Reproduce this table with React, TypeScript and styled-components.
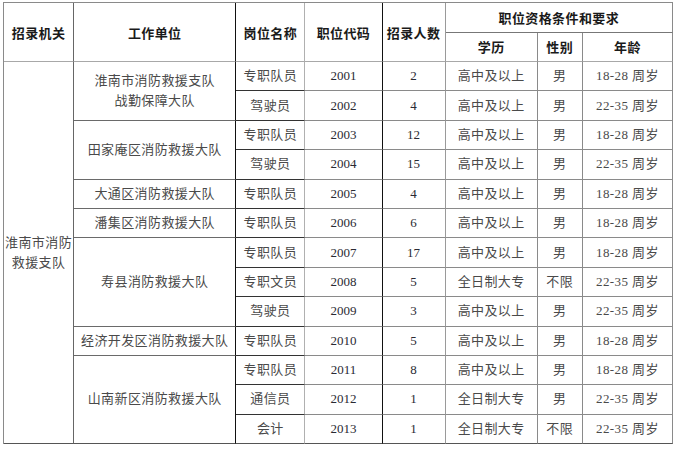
import React from "react";
import styled, { createGlobalStyle } from "styled-components";

const Global = createGlobalStyle`
  html, body { margin: 0; padding: 0; background: #fff; }
  body { font-family: "Liberation Serif", "Noto Sans CJK SC", serif; }
`;

const Page = styled.div`
  padding: 2px 0 0 3px;
`;

const Table = styled.table`
  border-collapse: separate;
  border-spacing: 0;
  table-layout: fixed;
  width: 670px;
  border-top: 1px solid #8a8a8a;
  border-left: 1px solid #8a8a8a;
  font-family: "Liberation Serif", "Noto Sans CJK SC", serif;
  font-size: 13px;
`;

const HeadRow = styled.tr`
  height: 29.5px;
`;

const BodyRow = styled.tr`
  height: 29.4px;
`;

type CellProps = { $r?: string; $b?: string };

const Th = styled.th<CellProps>`
  padding: 0;
  font-weight: 700;
  color: #1a1a1a;
  text-align: center;
  vertical-align: middle;
  letter-spacing: 0.4px;
  border-right: 1px solid ${(p) => p.$r || "#8a8a8a"};
  border-bottom: 1px solid ${(p) => p.$b || "#a8a8a8"};
`;

const Td = styled.td<CellProps>`
  padding: 0;
  font-weight: 400;
  color: #4a4a4a;
  text-align: center;
  vertical-align: middle;
  line-height: 20px;
  letter-spacing: 0.4px;
  white-space: nowrap;
  border-right: 1px solid ${(p) => p.$r || "#8a8a8a"};
  border-bottom: 1px solid ${(p) => p.$b || "#808080"};
`;

const Num = styled(Td)`
  color: #2a2a33;
  letter-spacing: 0;
`;

const C1 = "#666";
const C2 = "#111";
const C3 = "#b0b0b0";
const C4 = "#111";
const C5 = "#9a9a9a";

type Row = {
  unit?: { text: React.ReactNode; span: number };
  post: string;
  code: string;
  count: string;
  edu: string;
  sex: string;
  age: string;
};

const rows: Row[] = [
  { unit: { text: <>淮南市消防救援支队<br />战勤保障大队</>, span: 2 }, post: "专职队员", code: "2001", count: "2", edu: "高中及以上", sex: "男", age: "18-28 周岁" },
  { post: "驾驶员", code: "2002", count: "4", edu: "高中及以上", sex: "男", age: "22-35 周岁" },
  { unit: { text: "田家庵区消防救援大队", span: 2 }, post: "专职队员", code: "2003", count: "12", edu: "高中及以上", sex: "男", age: "18-28 周岁" },
  { post: "驾驶员", code: "2004", count: "15", edu: "高中及以上", sex: "男", age: "22-35 周岁" },
  { unit: { text: "大通区消防救援大队", span: 1 }, post: "专职队员", code: "2005", count: "4", edu: "高中及以上", sex: "男", age: "18-28 周岁" },
  { unit: { text: "潘集区消防救援大队", span: 1 }, post: "专职队员", code: "2006", count: "6", edu: "高中及以上", sex: "男", age: "18-28 周岁" },
  { unit: { text: "寿县消防救援大队", span: 3 }, post: "专职队员", code: "2007", count: "17", edu: "高中及以上", sex: "男", age: "18-28 周岁" },
  { post: "专职文员", code: "2008", count: "5", edu: "全日制大专", sex: "不限", age: "22-35 周岁" },
  { post: "驾驶员", code: "2009", count: "3", edu: "高中及以上", sex: "男", age: "22-35 周岁" },
  { unit: { text: "经济开发区消防救援大队", span: 1 }, post: "专职队员", code: "2010", count: "5", edu: "高中及以上", sex: "男", age: "18-28 周岁" },
  { unit: { text: "山南新区消防救援大队", span: 3 }, post: "专职队员", code: "2011", count: "8", edu: "高中及以上", sex: "男", age: "18-28 周岁" },
  { post: "通信员", code: "2012", count: "1", edu: "全日制大专", sex: "男", age: "22-35 周岁" },
  { post: "会计", code: "2013", count: "1", edu: "全日制大专", sex: "不限", age: "22-35 周岁" },
];

export default function App() {
  return (
    <Page>
      <Global />
      <Table>
        <colgroup>
          <col style={{ width: 70 }} />
          <col style={{ width: 162 }} />
          <col style={{ width: 69 }} />
          <col style={{ width: 77 }} />
          <col style={{ width: 63 }} />
          <col style={{ width: 92 }} />
          <col style={{ width: 45 }} />
          <col style={{ width: 90 }} />
        </colgroup>
        <thead>
          <HeadRow>
            <Th rowSpan={2} $r={C1}>招录机关</Th>
            <Th rowSpan={2} $r={C2}>工作单位</Th>
            <Th rowSpan={2} $r={C3}>岗位名称</Th>
            <Th rowSpan={2} $r={C4}>职位代码</Th>
            <Th rowSpan={2} $r={C5}>招录人数</Th>
            <Th colSpan={3} $b="#777">职位资格条件和要求</Th>
          </HeadRow>
          <HeadRow>
            <Th>学历</Th>
            <Th>性别</Th>
            <Th>年龄</Th>
          </HeadRow>
        </thead>
        <tbody>
          {rows.map((r, i) => (
            <BodyRow key={r.code}>
              {i === 0 && (
                <Td rowSpan={13} $r={C1} $b="#555">
                  淮南市消防
                  <br />
                  救援支队
                </Td>
              )}
              {r.unit && (
                <Td rowSpan={r.unit.span} $r={C2} $b={i + r.unit.span === 13 ? "#555" : "#6a6a6a"}>
                  {r.unit.text}
                </Td>
              )}
              <Td $r={C3} $b={i === 12 ? "#555" : "#333"}>{r.post}</Td>
              <Num $r={C4} $b={i === 12 ? "#555" : "#8a8a8a"}>{r.code}</Num>
              <Num $r={C5} $b={i === 12 ? "#555" : "#8a8a8a"}>{r.count}</Num>
              <Td $b={i === 12 ? "#555" : "#8a8a8a"}>{r.edu}</Td>
              <Td $b={i === 12 ? "#555" : "#8a8a8a"}>{r.sex}</Td>
              <Td $b={i === 12 ? "#555" : "#8a8a8a"}>{r.age}</Td>
            </BodyRow>
          ))}
        </tbody>
      </Table>
    </Page>
  );
}
